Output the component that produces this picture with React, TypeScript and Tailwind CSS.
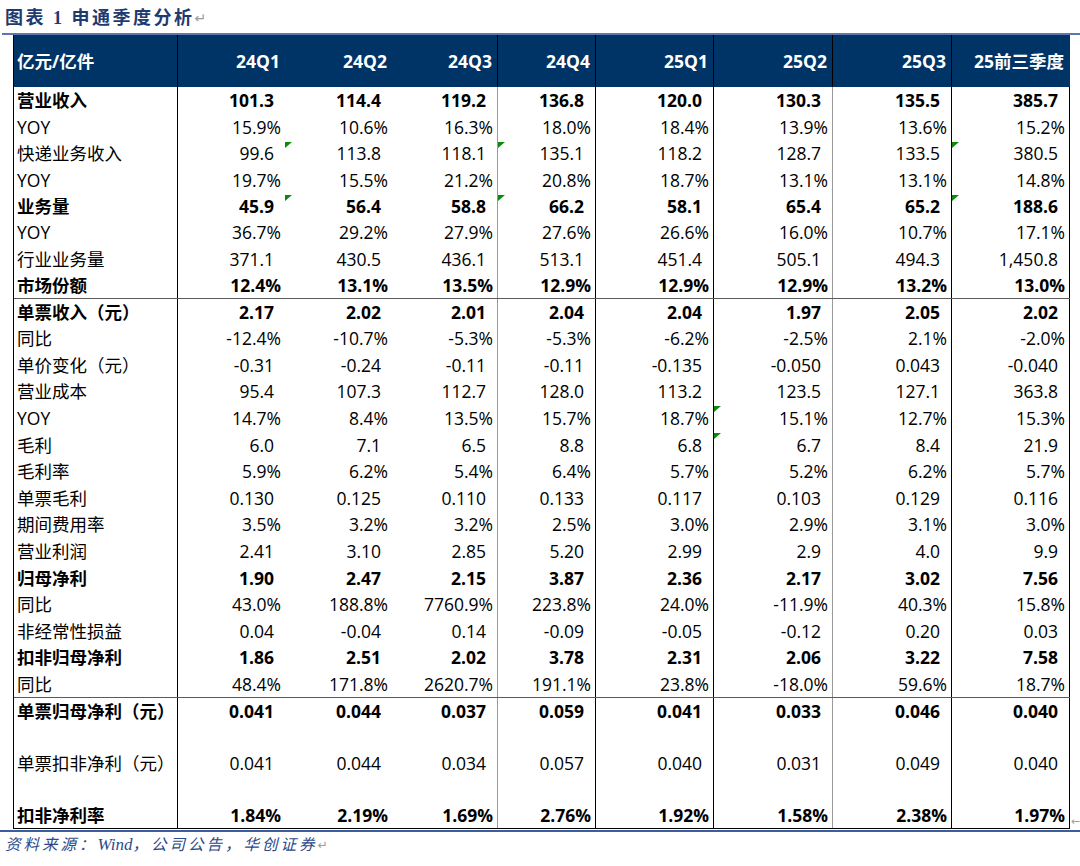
import React from 'react';

const cols = ['24Q1', '24Q2', '24Q3', '24Q4', '25Q1', '25Q2', '25Q3', '25前三季度'];

// right border of each column (label first)
const colBorder = [
  'border-r border-r-black',
  '',
  '',
  'border-r border-r-[#9a9a9a]',
  'border-r border-r-black',
  'border-r border-r-black',
  'border-r border-r-[#9a9a9a]',
  'border-r border-r-black',
  'border-r border-r-black',
];

const headBorder = [
  'border-r border-r-black',
  '',
  '',
  'border-r border-r-black',
  'border-r border-r-black',
  'border-r border-r-black',
  'border-r border-r-black',
  'border-r border-r-black',
  'border-r border-r-transparent',
];

type Row = { label: string; values: string[]; bold?: boolean };

const block1: Row[] = [
  { label: '营业收入', bold: true, values: ['101.3', '114.4', '119.2', '136.8', '120.0', '130.3', '135.5', '385.7'] },
  { label: 'YOY', values: ['15.9%', '10.6%', '16.3%', '18.0%', '18.4%', '13.9%', '13.6%', '15.2%'] },
  { label: '快递业务收入', values: ['99.6', '113.8', '118.1', '135.1', '118.2', '128.7', '133.5', '380.5'] },
  { label: 'YOY', values: ['19.7%', '15.5%', '21.2%', '20.8%', '18.7%', '13.1%', '13.1%', '14.8%'] },
  { label: '业务量', bold: true, values: ['45.9', '56.4', '58.8', '66.2', '58.1', '65.4', '65.2', '188.6'] },
  { label: 'YOY', values: ['36.7%', '29.2%', '27.9%', '27.6%', '26.6%', '16.0%', '10.7%', '17.1%'] },
  { label: '行业业务量', values: ['371.1', '430.5', '436.1', '513.1', '451.4', '505.1', '494.3', '1,450.8'] },
  { label: '市场份额', bold: true, values: ['12.4%', '13.1%', '13.5%', '12.9%', '12.9%', '12.9%', '13.2%', '13.0%'] },
];

const block2: Row[] = [
  { label: '单票收入（元）', bold: true, values: ['2.17', '2.02', '2.01', '2.04', '2.04', '1.97', '2.05', '2.02'] },
  { label: '同比', values: ['-12.4%', '-10.7%', '-5.3%', '-5.3%', '-6.2%', '-2.5%', '2.1%', '-2.0%'] },
  { label: '单价变化（元）', values: ['-0.31', '-0.24', '-0.11', '-0.11', '-0.135', '-0.050', '0.043', '-0.040'] },
  { label: '营业成本', values: ['95.4', '107.3', '112.7', '128.0', '113.2', '123.5', '127.1', '363.8'] },
  { label: 'YOY', values: ['14.7%', '8.4%', '13.5%', '15.7%', '18.7%', '15.1%', '12.7%', '15.3%'] },
  { label: '毛利', values: ['6.0', '7.1', '6.5', '8.8', '6.8', '6.7', '8.4', '21.9'] },
  { label: '毛利率', values: ['5.9%', '6.2%', '5.4%', '6.4%', '5.7%', '5.2%', '6.2%', '5.7%'] },
  { label: '单票毛利', values: ['0.130', '0.125', '0.110', '0.133', '0.117', '0.103', '0.129', '0.116'] },
  { label: '期间费用率', values: ['3.5%', '3.2%', '3.2%', '2.5%', '3.0%', '2.9%', '3.1%', '3.0%'] },
  { label: '营业利润', values: ['2.41', '3.10', '2.85', '5.20', '2.99', '2.9', '4.0', '9.9'] },
  { label: '归母净利', bold: true, values: ['1.90', '2.47', '2.15', '3.87', '2.36', '2.17', '3.02', '7.56'] },
  { label: '同比', values: ['43.0%', '188.8%', '7760.9%', '223.8%', '24.0%', '-11.9%', '40.3%', '15.8%'] },
  { label: '非经常性损益', values: ['0.04', '-0.04', '0.14', '-0.09', '-0.05', '-0.12', '0.20', '0.03'] },
  { label: '扣非归母净利', bold: true, values: ['1.86', '2.51', '2.02', '3.78', '2.31', '2.06', '3.22', '7.58'] },
  { label: '同比', values: ['48.4%', '171.8%', '2620.7%', '191.1%', '23.8%', '-18.0%', '59.6%', '18.7%'] },
];

const block3: Row[] = [
  { label: '单票归母净利（元）', bold: true, values: ['0.041', '0.044', '0.037', '0.059', '0.041', '0.033', '0.046', '0.040'] },
  { label: '单票扣非净利（元）', values: ['0.041', '0.044', '0.034', '0.057', '0.040', '0.031', '0.049', '0.040'] },
  { label: '扣非净利率', bold: true, values: ['1.84%', '2.19%', '1.69%', '2.76%', '1.92%', '1.58%', '2.38%', '1.97%'] },
];

// excel green corner marks: "block-row-col"
const marks = new Set(['1-2-1', '1-4-1', '1-2-3', '1-4-3', '1-2-7', '1-4-7', '2-4-5', '2-5-5']);

const grid = 'grid grid-cols-[164px_107px_107px_106px_98px_118px_119px_119px_118px]';

function DataRow({ row, height, block, idx, top }: { row: Row; height: string; block: number; idx: number; top?: boolean }) {
  return (
    <div className={`${grid} ${height} ${top ? 'border-t border-t-[#5a5a5a]' : ''} ${row.bold ? 'font-bold' : ''}`}>
      <div className={`flex items-end pl-[3px] pb-[3px] ${colBorder[0]}`}>
        <span className="leading-[20px] whitespace-nowrap">{row.label}</span>
      </div>
      {row.values.map((v, i) => (
        <div
          key={i}
          className={`relative flex items-end justify-end pb-[3px] ${v.endsWith('%') ? 'pr-[4px]' : 'pr-[11px]'} ${colBorder[i + 1]}`}
        >
          {marks.has(`${block}-${idx}-${i}`) && (
            <span className="absolute top-[2px] left-0 w-0 h-0 border-t-[6px] border-t-[#0a8a0a] border-r-[7px] border-r-transparent" />
          )}
          <span className="leading-[20px] whitespace-nowrap">{v}</span>
        </div>
      ))}
    </div>
  );
}

export default function App() {
  return (
    <div className="w-[1080px] h-[866px] bg-white overflow-hidden">
      <div className="h-[33px] pl-[5px] flex items-center pt-[4px]">
        <span className="text-[18px] font-bold text-[#1f3a6e] font-['Liberation_Serif','Noto_Sans_CJK_SC',serif] tracking-[2.5px]">
          图表 1 申通季度分析
        </span>
        <span className="text-[14px] text-[#9a9a9a] font-['DejaVu_Sans',sans-serif]">↵</span>
      </div>
      <div className="ml-[2px] h-[2px] bg-[#5b78ab]" />

      <div className="relative ml-[13px] w-[1057px] border-l border-l-black border-b border-b-black text-[17.5px] text-black font-['Open_Sans','Noto_Sans_CJK_SC',sans-serif]">
        <div className={`${grid} h-[52px] bg-[#003366] text-white font-bold`}>
          <div className={`flex items-center pl-[3px] ${headBorder[0]}`}>亿元/亿件</div>
          {cols.map((c, i) => (
            <div key={c} className={`flex items-center justify-end pr-[5px] ${headBorder[i + 1]}`}>
              {c}
            </div>
          ))}
        </div>

        {block1.map((r, i) => (
          <DataRow key={`a${i}`} row={r} height="h-[26.375px]" block={1} idx={i} />
        ))}
        {block2.map((r, i) => (
          <DataRow key={`b${i}`} row={r} height="h-[26.6px]" block={2} idx={i} top={i === 0} />
        ))}
        <DataRow row={block3[0]} height="h-[27px]" block={3} idx={0} top />
        <DataRow row={block3[1]} height="h-[52px]" block={3} idx={1} />
        <DataRow row={block3[2]} height="h-[52px]" block={3} idx={2} />

        <span className="absolute right-[-10px] bottom-[1px] text-[11px] leading-none text-[#a0a0a0] font-['DejaVu_Sans',sans-serif]">
          ←
        </span>
      </div>

      <div className="mt-[1px] h-[2px] bg-[#3b5ea0]" />
      <div className="pl-[5px] pt-[3px] flex items-center">
        <span className="italic text-[15.5px] leading-[20px] text-[#2b4a8a] font-['Liberation_Serif','Noto_Sans_CJK_SC',serif]">
          <span className="tracking-[3px]">资料来源：</span>
          <span className="text-[17px]">Wind</span>
          <span className="tracking-[3px]">，公司公告，华创证券</span>
        </span>
        <span className="text-[12px] text-[#9a9a9a] font-['DejaVu_Sans',sans-serif]">↵</span>
      </div>
    </div>
  );
}
